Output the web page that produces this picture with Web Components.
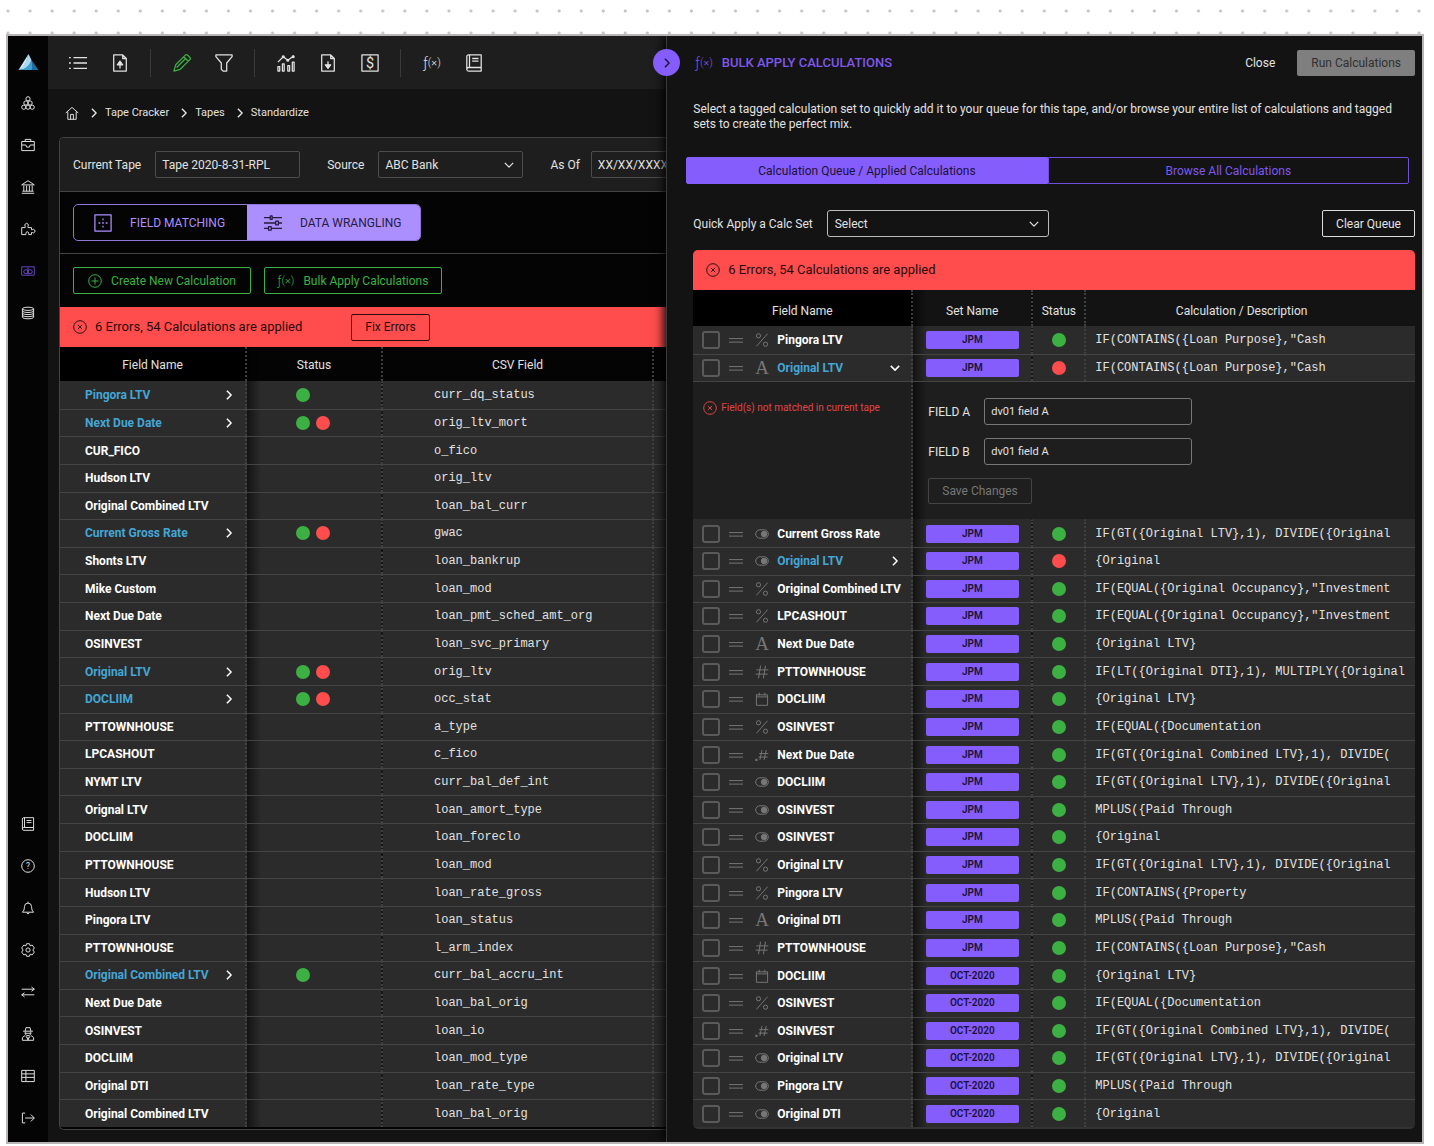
<!DOCTYPE html>
<html lang="en">
<head>
  <meta charset="utf-8" />
  <title>Tape Cracker - Standardize</title>
  <style>
    :root {
      --bg: #131313;
      --bar: #1e1e1e;
      --row: #2b2b2b;
      --line: #444;
      --text: #e2e2e2;
      --purple: #855dfc;
      --lilac: #ac8fff;
      --green: #3cb043;
      --red: #ff4d4d;
      --blue: #44a6d6;
    }

    * {
      box-sizing: border-box;
    }

    body {
      margin: 0;
      padding: 34px 10px 2px 6px;
      min-height: 100vh;
      display: grid;
      color: var(--text);
      font: 12px/16px Roboto, sans-serif;
      background: #fff radial-gradient(circle at 8px 11px, #c4c4c4 1px, transparent 2px) 0 0 / 22px 22px;
      background-repeat: round repeat;
    }
  </style>
</head>
<body>
  <tape-app></tape-app>

  <script>
    const base = `
      * { box-sizing: border-box; }
      button, input, select { font: inherit; color: inherit; margin: 0; }
      button { background: none; border: 0; padding: 0; cursor: pointer; white-space: nowrap; }
      a { color: inherit; text-decoration: none; }
    `;

    // all icons share a 20x20 grid and take the current colour
    const ICONS = {
      logo: '<g stroke="none"><path d="M10 2 0 18c4-1 7-4 10-16z" fill="#d5ecf8"/><path d="M10 2C8 9 5 15 0 18c6 0 11-3 13-10z" fill="#a9d8f0"/><path d="M13 8c-2 6-7 10-13 10h14c1-3 0-7-1-10z" fill="#3f9fd0"/><path d="m13 8 7 10h-7c1-3 1-6 0-10z" fill="#1d6fa3"/></g>',
      group: '<circle cx="10" cy="4" r="3"/><circle cx="7" cy="10" r="3"/><circle cx="13" cy="10" r="3"/><circle cx="4" cy="16" r="3"/><circle cx="10" cy="16" r="3"/><circle cx="16" cy="16" r="3"/>',
      briefcase: '<path d="M1 5h18v13H1zM6 5V2h8v3M1 10h6l1 3h4l1-3h6"/>',
      bank: '<path d="M1 7 10 1l9 6zM2 16h16M1 19h18M4 8v8M8 8v8M12 8v8M16 8v8"/>',
      puzzle: '<path d="M1 8h5V6a2.5 2.5 0 1 1 4 0v2h5v3h1a2.5 2.5 0 1 1 0 4h-1v3h-4v-2a2 2 0 0 0-4 0v2H1z"/>',
      cash: '<path d="M1 4h18v12H1zM10 5v10"/><circle cx="7" cy="11" r="3"/><circle cx="13" cy="11" r="3"/>',
      database: '<path d="M2 4c0-3 16-3 16 0v12c0 3-16 3-16 0zM2 4c0 3 16 3 16 0M2 7c0 3 16 3 16 0M2 10c0 3 16 3 16 0M2 13c0 3 16 3 16 0"/>',
      book: '<path d="M2 17V3q0-2 2-2h14v18H4q-2 0-2-2 0-2 2-2h14M5 1v14M8 5h7M8 8h7"/>',
      help: '<circle cx="10" cy="10" r="9"/><text x="10" y="14" font-size="12" text-anchor="middle" fill="currentColor" stroke="none">?</text>',
      bell: '<path d="M2 16q3-2 3-8a5 5 0 0 1 10 0q0 6 3 8zM10 3V1M8 17q2 3 4 0"/>',
      gear: '<path d="M8 1h4l1 3 3-1 3 4-2 3 2 3-3 4-3-1-1 3H8l-1-3-3 1-3-4 2-3-2-3 3-4 3 1z"/><circle cx="10" cy="10" r="3"/>',
      swap: '<path d="M1 6h18l-4-3M19 6l-4 3M19 14H1l4-3M1 14l4 3"/>',
      agent: '<path d="M6 6 7 1h6l1 5M3 6h14M6 7v3q4 5 8 0V7M6 9h8M6 12l-4 3v4h16v-4l-4-3M7 13l3 5 3-5M10 14v5"/>',
      grid: '<path d="M1 2h18v16H1zM1 7h18M1 12h18M7 2v16"/>',
      exit: '<path d="M6 3H2v14h4M6 10h13M14 5l5 5-5 5"/>',
      list: '<path d="M5 4h15M5 10h15M5 16h15M0 4h2M0 10h2M0 16h2"/>',
      upload: '<path d="M3 1h10l4 4v14H3zM13 1v4h4M10 16v-5"/><path d="m10 8 3 4H7z" fill="currentColor"/>',
      download: '<path d="M3 1h10l4 4v14H3zM13 1v4h4M10 8v5"/><path d="m10 16-3-4h6z" fill="currentColor"/>',
      pencil: '<path d="m1 19 2-7L14 1q1-1 3 1l1 1q2 2 1 3L8 17zM12 3l5 5M14 5 4 15"/>',
      filter: '<path d="M1 1h18v2l-6 7v9H9l-2-2v-7L1 3z"/>',
      chart: '<path d="M1 14h2v5H1zM6 11h2v8H6zM12 13h2v6h-2zM17 9h2v10h-2zM1 9l6-6 5 4 7-5"/><circle cx="7" cy="3" r="1"/><circle cx="12" cy="7" r="1"/><circle cx="18" cy="3" r="1"/>',
      dollar: '<path d="M1 1h18v18H1z"/><text x="10" y="16" font-size="16" text-anchor="middle" fill="currentColor" stroke="none">$</text>',
      home: '<path d="m1 10 9-8 9 8M4 8v11h12V8M8 19v-7h4v7"/>',
      right: '<path d="m7 4 6 6-6 6"/>',
      down: '<path d="m4 7 6 6 6-6"/>',
      move: '<path d="M1 1h18v18H1z"/><path d="M10 5v2M10 9v2M10 13v2M5 10h2M13 10h2"/>',
      sliders: '<path d="M0 4h7M9 4h11M0 10h13M16 10h4M0 16h5M8 16h12M7 2h2v4H7zM13 8h3v4h-3zM5 14h3v4H5z"/>',
      plus: '<circle cx="10" cy="10" r="9"/><path d="M10 5v10M5 10h10"/>',
      error: '<circle cx="10" cy="10" r="9"/><path d="m7 7 6 6M13 7l-6 6"/>',
      handle: '<path d="M0 8h20M0 13h20"/>',
      percent: '<circle cx="5" cy="4" r="3"/><circle cx="15" cy="16" r="3"/><path d="M18 1 2 19"/>',
      alpha: '<text x="10" y="19" font-family="Liberation Serif, serif" font-size="27" font-weight="400" text-anchor="middle" fill="currentColor" stroke="none">A</text>',
      toggle: '<rect x="1" y="4" width="18" height="12" rx="6"/><circle cx="13" cy="10" r="4" fill="currentColor"/>',
      hash: '<path d="M8 1 5 19M15 1l-3 18M2 7h17M1 13h17"/>',
      decimal: '<path d="M10 3 7 17M16 3l-3 14M6 8h13M5 13h13M1 16h2v2H1z"/>',
      date: '<path d="M2 4h16v15H2zM2 7h16M6 1v4M14 1v4"/>'
    };

    class AppIcon extends HTMLElement {
      constructor() {
        super();
        this.attachShadow({ mode: 'open' });
      }

      static get observedAttributes() {
        return ['name'];
      }

      attributeChangedCallback(name, oldValue, newValue) {
        if (oldValue === newValue) return;

        this.shadowRoot.innerHTML = `
          <style>
            :host { display: inline-block; flex: none; width: 14px; height: 14px; }
            svg { display: block; width: 100%; height: 100%; overflow: visible; }
          </style>
          <svg viewBox="0 0 20 20" fill="none" stroke="currentColor" stroke-width="var(--stroke, 1.4)" stroke-linejoin="round" aria-hidden="true">
            ${ICONS[newValue] || ''}
          </svg>
        `;
      }
    }

    customElements.define('app-icon', AppIcon);

    class FxMark extends HTMLElement {
      constructor() {
        super();
        this.attachShadow({ mode: 'open' });
        this.shadowRoot.innerHTML = `
          <style>
            :host { display: inline-flex; align-items: center; font-weight: 300; font-size: 14px; line-height: 16px; }
            small { font-size: 11px; }
          </style>
          <span>ƒ</span><small>(×)</small>
        `;
      }
    }

    customElements.define('fx-mark', FxMark);

    class SideNav extends HTMLElement {
      constructor() {
        super();
        this.attachShadow({ mode: 'open' });

        const link = (icon, label) => `
          <a href="#${icon}" aria-label="${label}" class="${icon}"><app-icon name="${icon}"></app-icon></a>
        `;

        this.shadowRoot.innerHTML = `
          <style>
            ${base}
            :host {
              display: flex;
              flex-direction: column;
              justify-content: space-between;
              background: #040404;
              padding: 5px 0 3px;
            }
            nav { display: flex; flex-direction: column; }
            a { height: 42px; display: grid; place-items: center; }
            .logo { height: 41px; }
            .logo app-icon { width: 21px; height: 20px; }
            .cash { color: #6548c4; }
          </style>
          <nav aria-label="Main">
            ${link('logo', 'Home')}
            ${link('group', 'Pools')}
            ${link('briefcase', 'Portfolio')}
            ${link('bank', 'Bank')}
            ${link('puzzle', 'Integrations')}
            ${link('cash', 'Tape Cracker')}
            ${link('database', 'Data')}
          </nav>
          <nav aria-label="Account">
            ${link('book', 'Docs')}
            ${link('help', 'Help')}
            ${link('bell', 'Alerts')}
            ${link('gear', 'Settings')}
            ${link('swap', 'Switch')}
            ${link('agent', 'Admin')}
            ${link('grid', 'Tables')}
            ${link('exit', 'Log out')}
          </nav>
        `;
      }
    }

    customElements.define('side-nav', SideNav);

    class ToolBar extends HTMLElement {
      constructor() {
        super();
        this.attachShadow({ mode: 'open' });

        const tool = (icon, label) => `
          <button type="button" aria-label="${label}" class="${icon}"><app-icon name="${icon}"></app-icon></button>
        `;

        this.shadowRoot.innerHTML = `
          <style>
            ${base}
            :host {
              display: flex;
              align-items: center;
              height: 53px;
              padding-left: 9px;
              background: var(--bar);
            }
            button { width: 42px; height: 42px; display: grid; place-items: center; flex: none; }
            app-icon { width: 18px; height: 18px; }
            .pencil { color: var(--green); }
            hr { width: 1px; height: 28px; margin: 0 10px 0 9px; border: 0; background: #3a3a3a; flex: none; }
          </style>
          ${tool('list', 'List')}
          ${tool('upload', 'Upload')}
          <hr />
          ${tool('pencil', 'Edit')}
          ${tool('filter', 'Filter')}
          <hr />
          ${tool('chart', 'Chart')}
          ${tool('download', 'Download')}
          ${tool('dollar', 'Pricing')}
          <hr />
          <button type="button" aria-label="Calculations"><fx-mark></fx-mark></button>
          ${tool('book', 'Dictionary')}
        `;
      }
    }

    customElements.define('tool-bar', ToolBar);

    class CrumbTrail extends HTMLElement {
      constructor() {
        super();
        this.attachShadow({ mode: 'open' });
        this.shadowRoot.innerHTML = `
          <style>
            ${base}
            :host { display: block; padding-left: 17px; font-size: 11px; }
            nav { height: 48px; display: flex; align-items: center; }
            .home { display: flex; }
            .sep { margin: 0 4px 0 8px; --stroke: 2; }
          </style>
          <nav aria-label="Breadcrumb">
            <a class="home" href="#home" aria-label="Home"><app-icon name="home"></app-icon></a>
            <app-icon class="sep" name="right"></app-icon>
            <a href="#cracker">Tape Cracker</a>
            <app-icon class="sep" name="right"></app-icon>
            <a href="#tapes">Tapes</a>
            <app-icon class="sep" name="right"></app-icon>
            <a href="#standardize">Standardize</a>
          </nav>
        `;
      }
    }

    customElements.define('crumb-trail', CrumbTrail);

    class TapeFilters extends HTMLElement {
      constructor() {
        super();
        this.attachShadow({ mode: 'open' });
        this.shadowRoot.innerHTML = `
          <style>
            ${base}
            :host {
              display: flex;
              align-items: center;
              height: 54px;
              padding-left: 13px;
              background: var(--bar);
              border-bottom: 1px solid var(--line);
              white-space: nowrap;
            }
            label { margin-right: 14px; }
            label:last-of-type { margin-right: 11px; }
            input, select {
              width: 145px;
              height: 27px;
              padding: 0 6px;
              background: none;
              border: 1px solid #4c4c4c;
              border-radius: 2px;
              appearance: none;
              flex: none;
            }
            input, .pick { margin-right: 27px; }
            .pick { display: grid; align-items: center; flex: none; }
            .pick > * { grid-area: 1 / 1; }
            app-icon { justify-self: end; margin-right: 7px; pointer-events: none; --stroke: 1.8; }
          </style>
          <label for="tape">Current Tape</label>
          <input id="tape" value="Tape 2020-8-31-RPL" />
          <label for="source">Source</label>
          <span class="pick">
            <select id="source"><option>ABC Bank</option></select>
            <app-icon name="down"></app-icon>
          </span>
          <label for="asof">As Of</label>
          <input id="asof" value="XX/XX/XXXX" />
        `;
      }
    }

    customElements.define('tape-filters', TapeFilters);

    class ViewSwitch extends HTMLElement {
      constructor() {
        super();
        this.attachShadow({ mode: 'open' });
        this.shadowRoot.innerHTML = `
          <style>
            ${base}
            :host { display: block; padding: 12px 13px; border-bottom: 1px solid var(--line); }
            div {
              display: inline-flex;
              vertical-align: top;
              border: 1px solid #8f76d8;
              border-radius: 5px;
              overflow: hidden;
            }
            button {
              width: 173px;
              height: 35px;
              display: flex;
              align-items: center;
              gap: 18px;
              padding-left: 20px;
              color: var(--lilac);
            }
            .active { background: var(--lilac); color: #251c40; padding-left: 17px; }
            app-icon { width: 18px; height: 18px; }
          </style>
          <div>
            <button type="button"><app-icon name="move"></app-icon>FIELD MATCHING</button>
            <button type="button" class="active"><app-icon name="sliders"></app-icon>DATA WRANGLING</button>
          </div>
        `;
      }
    }

    customElements.define('view-switch', ViewSwitch);

    class ErrorBanner extends HTMLElement {
      constructor() {
        super();
        this.attachShadow({ mode: 'open' });
        this.shadowRoot.innerHTML = `
          <style>
            :host {
              display: flex;
              align-items: center;
              gap: 8px;
              height: 40px;
              padding-left: 13px;
              background: var(--red);
              color: #2a0c0c;
              font-size: 13px;
            }
          </style>
          <app-icon name="error"></app-icon>
          <slot></slot>
        `;
      }
    }

    customElements.define('error-banner', ErrorBanner);

    const TAPE_ROWS = [
      ['Pingora LTV', 'g', 'curr_dq_status'],
      ['Next Due Date', 'gr', 'orig_ltv_mort'],
      ['CUR_FICO', '', 'o_fico'],
      ['Hudson LTV', '', 'orig_ltv'],
      ['Original Combined LTV', '', 'loan_bal_curr'],
      ['Current Gross Rate', 'gr', 'gwac'],
      ['Shonts LTV', '', 'loan_bankrup'],
      ['Mike Custom', '', 'loan_mod'],
      ['Next Due Date', '', 'loan_pmt_sched_amt_org'],
      ['OSINVEST', '', 'loan_svc_primary'],
      ['Original LTV', 'gr', 'orig_ltv'],
      ['DOCLIIM', 'gr', 'occ_stat'],
      ['PTTOWNHOUSE', '', 'a_type'],
      ['LPCASHOUT', '', 'c_fico'],
      ['NYMT LTV', '', 'curr_bal_def_int'],
      ['Orignal LTV', '', 'loan_amort_type'],
      ['DOCLIIM', '', 'loan_foreclo'],
      ['PTTOWNHOUSE', '', 'loan_mod'],
      ['Hudson LTV', '', 'loan_rate_gross'],
      ['Pingora LTV', '', 'loan_status'],
      ['PTTOWNHOUSE', '', 'l_arm_index'],
      ['Original Combined LTV', 'g', 'curr_bal_accru_int'],
      ['Next Due Date', '', 'loan_bal_orig'],
      ['OSINVEST', '', 'loan_io'],
      ['DOCLIIM', '', 'loan_mod_type'],
      ['Original DTI', '', 'loan_rate_type'],
      ['Original Combined LTV', '', 'loan_bal_orig']
    ];

    // body rows have no set height, so they share what is left of the card
    const tableStyle = `
      :host { display: grid; }
      table { width: 100%; height: 100%; table-layout: fixed; border-collapse: separate; border-spacing: 0; }
      th, td { padding: 0; border-right: 2px dotted #404040; white-space: nowrap; overflow: hidden; }
      th:last-child, td:last-child { border-right: 0; }
      th { font-weight: 400; text-align: center; }
      td { border-top: 1px solid var(--line); line-height: 26px; }
      tbody tr { background: var(--row); }
      tbody tr:first-child td { border-top-color: transparent; }
      th:first-child { background: #000; }
      th:nth-child(2), td:nth-child(2) { background: linear-gradient(90deg, rgb(0, 0, 0, 0.55), transparent 14px); }
      .name { display: flex; align-items: center; font-weight: 700; color: #fff; }
      .name.link { color: var(--blue); }
      .open { margin-left: auto; color: #fff; display: grid; }
      .open app-icon { --stroke: 2.2; }
      .dot { display: block; width: 14px; height: 14px; border-radius: 50%; }
      .g { background: var(--green); }
      .r { background: var(--red); }
      .mono { font-family: "Liberation Mono", monospace; }
    `;

    class TapeTable extends HTMLElement {
      constructor() {
        super();
        this.attachShadow({ mode: 'open' });

        const rows = TAPE_ROWS.map(([name, status, field]) => `
          <tr>
            <td>
              <div class="name ${status ? 'link' : ''}">${name}
                ${status ? `<button type="button" class="open" aria-label="Open ${name}"><app-icon name="right"></app-icon></button>` : ''}
              </div>
            </td>
            <td><div class="status">${[...status].map(s => `<i class="dot ${s}"></i>`).join('')}</div></td>
            <td class="mono">${field}</td>
            <td></td>
          </tr>
        `).join('');

        this.shadowRoot.innerHTML = `
          <style>
            ${base}
            ${tableStyle}
            thead tr { height: 34px; }
            th { padding-top: 2px; }
            .name { padding: 0 9px 0 25px; }
            .status { display: flex; gap: 6px; padding-left: 49px; }
            .mono { padding-left: 51px; }
          </style>
          <table>
            <colgroup><col width="187" /><col width="136" /><col width="271" /><col /></colgroup>
            <thead><tr><th>Field Name</th><th>Status</th><th>CSV Field</th><th></th></tr></thead>
            <tbody>${rows}</tbody>
          </table>
        `;
      }
    }

    customElements.define('tape-table', TapeTable);

    const CONTAINS = 'IF(CONTAINS({Loan Purpose},"Cash';
    const DIVIDE = 'IF(GT({Original LTV},1), DIVIDE({Original';
    const COMBINED = 'IF(GT({Original Combined LTV},1), DIVIDE(';
    const OCCUPANCY = 'IF(EQUAL({Original Occupancy},"Investment';

    const CALC_ROWS = [
      ['percent', 'Pingora LTV', 'JPM', 'g', CONTAINS],
      ['alpha', 'Original LTV', 'JPM', 'r', CONTAINS, 'down'],
      ['toggle', 'Current Gross Rate', 'JPM', 'g', DIVIDE],
      ['toggle', 'Original LTV', 'JPM', 'r', '{Original', 'right'],
      ['percent', 'Original Combined LTV', 'JPM', 'g', OCCUPANCY],
      ['percent', 'LPCASHOUT', 'JPM', 'g', OCCUPANCY],
      ['alpha', 'Next Due Date', 'JPM', 'g', '{Original LTV}'],
      ['hash', 'PTTOWNHOUSE', 'JPM', 'g', 'IF(LT({Original DTI},1), MULTIPLY({Original'],
      ['date', 'DOCLIIM', 'JPM', 'g', '{Original LTV}'],
      ['percent', 'OSINVEST', 'JPM', 'g', 'IF(EQUAL({Documentation'],
      ['decimal', 'Next Due Date', 'JPM', 'g', COMBINED],
      ['toggle', 'DOCLIIM', 'JPM', 'g', DIVIDE],
      ['toggle', 'OSINVEST', 'JPM', 'g', 'MPLUS({Paid Through'],
      ['toggle', 'OSINVEST', 'JPM', 'g', '{Original'],
      ['percent', 'Original LTV', 'JPM', 'g', DIVIDE],
      ['percent', 'Pingora LTV', 'JPM', 'g', 'IF(CONTAINS({Property'],
      ['alpha', 'Original DTI', 'JPM', 'g', 'MPLUS({Paid Through'],
      ['hash', 'PTTOWNHOUSE', 'JPM', 'g', CONTAINS],
      ['date', 'DOCLIIM', 'OCT-2020', 'g', '{Original LTV}'],
      ['percent', 'OSINVEST', 'OCT-2020', 'g', 'IF(EQUAL({Documentation'],
      ['decimal', 'OSINVEST', 'OCT-2020', 'g', COMBINED],
      ['toggle', 'Original LTV', 'OCT-2020', 'g', DIVIDE],
      ['toggle', 'Pingora LTV', 'OCT-2020', 'g', 'MPLUS({Paid Through'],
      ['toggle', 'Original DTI', 'OCT-2020', 'g', '{Original']
    ];

    class CalcTable extends HTMLElement {
      constructor() {
        super();
        this.attachShadow({ mode: 'open' });

        const detail = `
          <tr class="detail">
            <td><p><app-icon name="error"></app-icon>Field(s) not matched in current tape</p></td>
            <td colspan="3">
              <form>
                <label for="a">FIELD A</label><input id="a" value="dv01 field A" />
                <label for="b">FIELD B</label><input id="b" value="dv01 field A" />
                <button type="button">Save Changes</button>
              </form>
            </td>
          </tr>
        `;

        const rows = CALC_ROWS.map(([type, name, set, status, calc, open], i) => `
          <tr>
            <td>
              <div class="name ${open ? 'link' : ''}">
                <input type="checkbox" id="row${i}" />
                <app-icon class="handle" name="handle"></app-icon>
                <app-icon class="type" name="${type}"></app-icon>
                <label for="row${i}">${name}</label>
                ${open ? `<button type="button" class="open" aria-label="Open ${name}"><app-icon name="${open}"></app-icon></button>` : ''}
              </div>
            </td>
            <td><span class="set">${set}</span></td>
            <td><i class="dot ${status}"></i></td>
            <td class="mono">${calc}</td>
          </tr>
          ${open === 'down' ? detail : ''}
        `).join('');

        this.shadowRoot.innerHTML = `
          <style>
            ${base}
            ${tableStyle}
            thead tr { height: 36px; }
            th { padding-top: 5px; }
            th:last-child { padding-right: 18px; }
            .name { padding: 0 9px; }
            input[type=checkbox] {
              appearance: none;
              width: 18px;
              height: 18px;
              border: 2px solid #5a5a5a;
              border-radius: 3px;
            }
            .handle { margin: 0 12px 0 9px; color: #777; }
            .type { margin-right: 8px; color: #777; }
            .set {
              display: block;
              width: 93px;
              margin: 0 auto;
              border-radius: 2px;
              background: var(--purple);
              color: #1c1238;
              font-size: 10px;
              font-weight: 600;
              line-height: 18px;
              text-align: center;
            }
            .dot { margin: 0 auto; }
            .mono { padding-left: 9px; }
            .detail { height: 138px; background: var(--bar); }
            .detail td { vertical-align: top; line-height: 16px; }
            .detail + tr td { border-top-color: transparent; }
            p {
              display: flex;
              align-items: center;
              gap: 4px;
              margin: 0;
              padding: 18px 10px;
              color: #e04545;
              font-size: 10px;
            }
            form {
              display: grid;
              grid-template-columns: 56px 208px;
              align-items: center;
              gap: 13px 0;
              padding: 16px 15px 0;
            }
            form input {
              height: 27px;
              padding: 0 6px;
              background: none;
              border: 1px solid #777;
              border-radius: 3px;
              font-size: 11px;
            }
            form button {
              grid-column: 1 / -1;
              justify-self: start;
              height: 26px;
              padding: 0 13px;
              border: 1px solid #444;
              border-radius: 2px;
              color: #777;
            }
          </style>
          <table>
            <colgroup><col width="220" /><col width="120" /><col width="53" /><col /></colgroup>
            <thead><tr><th>Field Name</th><th>Set Name</th><th>Status</th><th>Calculation / Description</th></tr></thead>
            <tbody>${rows}</tbody>
          </table>
        `;
      }
    }

    customElements.define('calc-table', CalcTable);

    class TapeView extends HTMLElement {
      constructor() {
        super();
        this.attachShadow({ mode: 'open' });
        this.shadowRoot.innerHTML = `
          <style>
            ${base}
            :host { display: flex; flex-direction: column; min-width: 0; overflow: hidden; background: var(--bg); }
            section {
              flex: 1;
              display: flex;
              flex-direction: column;
              margin: 0 0 12px 11px;
              padding-bottom: 2px;
              background: #040404;
              border: 1px solid var(--line);
              border-right: 0;
              border-radius: 5px 0 0 5px;
              overflow: hidden;
            }
            .actions { display: flex; gap: 13px; padding: 13px; }
            .actions button {
              display: flex;
              align-items: center;
              justify-content: center;
              gap: 9px;
              width: 178px;
              height: 27px;
              border: 1px solid var(--green);
              border-radius: 2px;
              color: var(--green);
            }
            .actions fx-mark { font-size: 12px; }
            .fix {
              height: 27px;
              margin-left: 41px;
              padding: 0 13px;
              border: 1px solid #2a0c0c;
              border-radius: 2px;
              font-size: 12px;
            }
            tape-table { flex: 1; }
          </style>
          <tool-bar></tool-bar>
          <crumb-trail></crumb-trail>
          <section>
            <tape-filters></tape-filters>
            <view-switch></view-switch>
            <div class="actions">
              <button type="button"><app-icon name="plus"></app-icon>Create New Calculation</button>
              <button type="button"><fx-mark></fx-mark>Bulk Apply Calculations</button>
            </div>
            <error-banner>6 Errors, 54 Calculations are applied <button type="button" class="fix">Fix Errors</button></error-banner>
            <tape-table></tape-table>
          </section>
        `;
      }
    }

    customElements.define('tape-view', TapeView);

    class CalcPanel extends HTMLElement {
      constructor() {
        super();
        this.attachShadow({ mode: 'open' });
        this.shadowRoot.innerHTML = `
          <style>
            ${base}
            :host {
              position: relative;
              display: flex;
              flex-direction: column;
              min-width: 0;
              padding: 0 7px 13px 26px;
              background: var(--bg);
              border-left: 1px solid #3a3a3a;
              box-shadow: -2px 0 10px #000;
            }
            .collapse {
              position: absolute;
              top: 13px;
              left: -14px;
              width: 27px;
              height: 27px;
              display: grid;
              place-items: center;
              border-radius: 50%;
              background: var(--purple);
              color: #1c1238;
            }
            .collapse app-icon { --stroke: 2; }
            header { display: flex; align-items: center; height: 53px; }
            h1 { flex: 1; margin: 0 0 0 9px; color: #7d58ec; font-size: 13px; font-weight: 500; }
            header fx-mark { color: #7d58ec; margin-left: 2px; }
            .run {
              height: 26px;
              margin-left: 22px;
              padding: 0 14px;
              border-radius: 2px;
              background: #7f7f7f;
              color: #303030;
            }
            .intro { margin: 13px 0 25px; line-height: 15px; }
            .tabs { display: grid; grid-template-columns: 1fr 1fr; margin: 0 6px 0 -7px; }
            .tabs button { height: 27px; border: 1px solid #6f4edb; color: #7d58ec; border-radius: 0 2px 2px 0; }
            .tabs .active { background: var(--purple); border-color: var(--purple); color: #1c1238; border-radius: 2px 0 0 2px; }
            .quick { display: flex; align-items: center; margin: 26px 0 13px; }
            .pick { display: grid; align-items: center; width: 222px; margin: 0 auto 0 14px; }
            .pick > * { grid-area: 1 / 1; }
            select { height: 27px; padding: 0 7px; appearance: none; background: none; border: 1px solid #bbb; border-radius: 3px; }
            .pick app-icon { justify-self: end; margin-right: 8px; pointer-events: none; --stroke: 1.8; }
            .clear { height: 27px; padding: 0 13px; border: 1px solid #ddd; border-radius: 2px; }
            section {
              flex: 1;
              display: flex;
              flex-direction: column;
              padding-bottom: 2px;
              background: linear-gradient(var(--bg) 50%, #333 50%);
              border-radius: 5px;
              overflow: hidden;
            }
            calc-table { flex: 1; background: var(--bg); }
          </style>
          <button type="button" class="collapse" aria-label="Collapse"><app-icon name="right"></app-icon></button>
          <header>
            <fx-mark></fx-mark>
            <h1>BULK APPLY CALCULATIONS</h1>
            <button type="button">Close</button>
            <button type="button" class="run">Run Calculations</button>
          </header>
          <p class="intro">Select a tagged calculation set to quickly add it to your queue for this tape, and/or browse your entire list of calculations and tagged sets to create the perfect mix.</p>
          <div class="tabs">
            <button type="button" class="active">Calculation Queue / Applied Calculations</button>
            <button type="button">Browse All Calculations</button>
          </div>
          <div class="quick">
            <label for="set">Quick Apply a Calc Set</label>
            <span class="pick">
              <select id="set"><option>Select</option></select>
              <app-icon name="down"></app-icon>
            </span>
            <button type="button" class="clear">Clear Queue</button>
          </div>
          <section>
            <error-banner>6 Errors, 54 Calculations are applied</error-banner>
            <calc-table></calc-table>
          </section>
        `;
      }
    }

    customElements.define('calc-panel', CalcPanel);

    class TapeApp extends HTMLElement {
      constructor() {
        super();
        this.attachShadow({ mode: 'open' });
        this.shadowRoot.innerHTML = `
          <style>
            :host {
              display: grid;
              grid-template-columns: 40px minmax(0, 9fr) minmax(0, 11fr);
              box-sizing: border-box;
              border: 2px solid #b9b5b5;
              background: var(--bg);
              overflow: hidden;
            }
          </style>
          <side-nav></side-nav>
          <tape-view></tape-view>
          <calc-panel></calc-panel>
        `;
      }
    }

    customElements.define('tape-app', TapeApp);
  </script>
</body>
</html>
